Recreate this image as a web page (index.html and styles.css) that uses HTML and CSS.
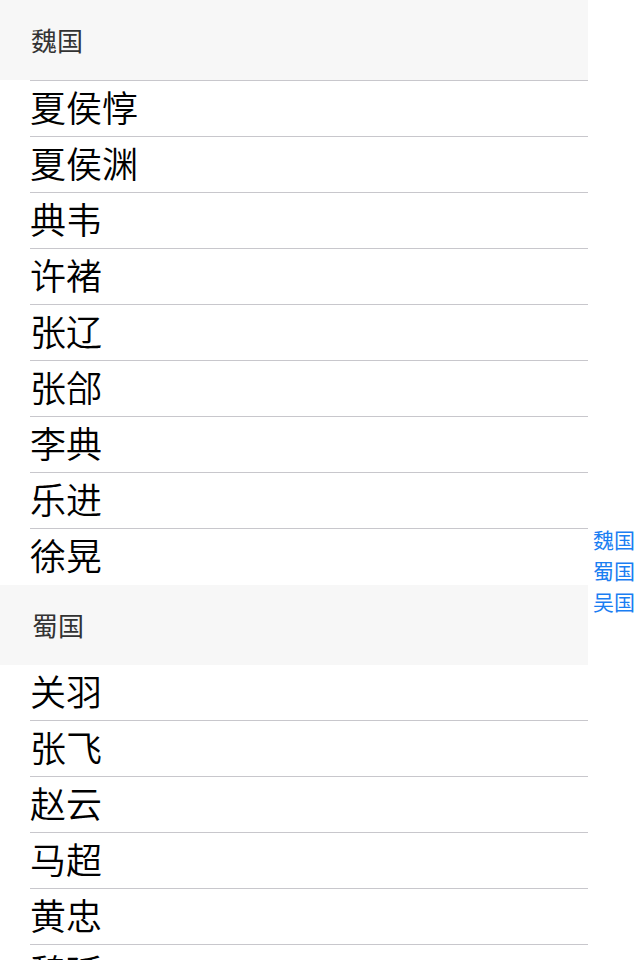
FILE: index.html
```html
<!DOCTYPE html>
<html lang="zh-CN">
<head>
    <meta charset="UTF-8">
    <meta name="viewport" content="width=device-width, initial-scale=1.0">
    <title>三国</title>
    <link rel="stylesheet" href="styles.css">
</head>
<body>
<div class="list">
    <div class="section">
        <div class="section-header">魏国</div>
        <div class="row">夏侯惇</div>
        <div class="row">夏侯渊</div>
        <div class="row">典韦</div>
        <div class="row">许褚</div>
        <div class="row">张辽</div>
        <div class="row">张郃</div>
        <div class="row">李典</div>
        <div class="row">乐进</div>
        <div class="row">徐晃</div>
    </div>
    <div class="section">
        <div class="section-header">蜀国</div>
        <div class="row first">关羽</div>
        <div class="row">张飞</div>
        <div class="row">赵云</div>
        <div class="row">马超</div>
        <div class="row">黄忠</div>
        <div class="row">魏延</div>
    </div>
</div>

<div class="index-bar">
    <a href="#">魏国</a>
    <a href="#">蜀国</a>
    <a href="#">吴国</a>
</div>
</body>
</html>
```

FILE: styles.css
```css
body {
    margin: 0;
    font-family: "Noto Sans CJK SC", "Noto Sans", sans-serif;
    background: #fff;
    overflow: hidden;
    height: 960px;
}
.list { width: 588px; }
.section + .section { margin-top: 1px; }
.section-header {
    height: 80px;
    line-height: 80px;
    padding-left: 31px;
    background-color: #f7f7f7;
    color: #333;
    font-size: 26px;
}
.section + .section .section-header { padding-left: 32px; }
.row {
    margin-left: 30px;
    height: 55px;
    line-height: 51px;
    border-top: 1px solid #c8c7cc;
    font-size: 36px;
    font-weight: 350;
    color: #000;
}
.row.first { border-top: none; }
.index-bar {
    position: absolute;
    right: 5px;
    top: 524px;
    display: flex;
    flex-direction: column;
    align-items: flex-end;
}
.index-bar a {
    display: block;
    height: 31px;
    line-height: 31px;
    font-size: 21px;
    color: #1a7ef2;
    text-decoration: none;
}
```
